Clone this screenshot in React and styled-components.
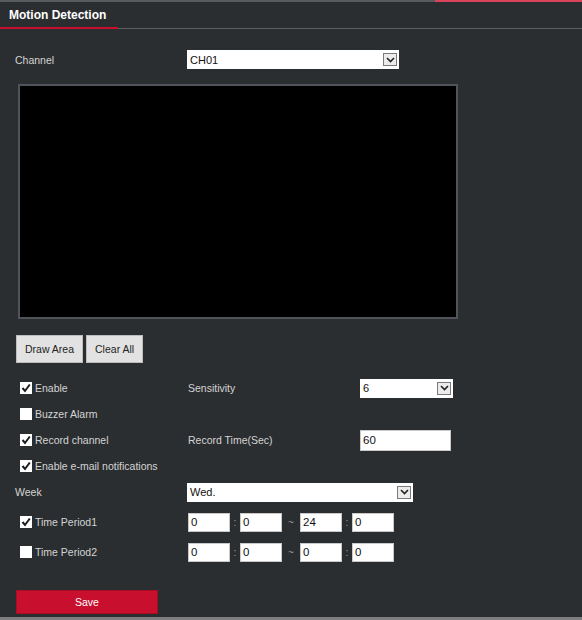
import styled, { createGlobalStyle } from "styled-components";

const GlobalStyle = createGlobalStyle`
  html, body { margin: 0; padding: 0; background: #2b2e31; }
  body { font-family: "Liberation Sans", Arial, sans-serif; }
`;

const Page = styled.div`
  width: 582px;
  height: 620px;
  background: #2b2e31;
  display: flex;
  flex-direction: column;
  overflow: hidden;
`;

const TopLine = styled.div`
  display: flex;
  height: 2px;
  .gray { flex: 1; background: #575a5d; }
  .red { width: 147px; background: #d9445a; }
`;

const TitleBar = styled.div`
  height: 25px;
  display: flex;
  align-items: center;
  padding-left: 9px;
  h2 {
    margin: 0;
    font-size: 12px;
    font-weight: bold;
    color: #ffffff;
  }
`;

const TitleLine = styled.div`
  display: flex;
  height: 2px;
  .red { width: 118px; background: #c8102e; }
  .gray { flex: 1; background: #5c5f62; height: 1px; margin-top: 1px; }
`;

const Content = styled.div`
  flex: 1;
  padding: 21px 0 0 15px;
  display: flex;
  flex-direction: column;
`;

const Row = styled.div`
  display: flex;
  align-items: center;
  height: ${(p) => p.$h || 26}px;
`;

const Label = styled.span`
  width: ${(p) => p.$w || 172}px;
  font-size: 10.5px;
  color: #d4d4d4;
  flex-shrink: 0;
`;

const SelectBox = styled.div`
  width: ${(p) => p.$w}px;
  height: 19px;
  background: #fff;
  display: flex;
  align-items: center;
  justify-content: space-between;
  box-sizing: border-box;
  padding: 0 2px 0 3px;
  font-size: 11px;
  color: #111;
`;

const Arrow = styled.span`
  width: 14px;
  height: 13px;
  box-sizing: border-box;
  border: 1px solid #7a7a7a;
  background: #ececec;
  display: flex;
  align-items: center;
  justify-content: center;
`;

const Video = styled.div`
  margin: 15px 0 0 3px;
  width: 440px;
  height: 235px;
  background: #000;
  border: 2px solid #50545a;
  box-sizing: border-box;
`;

const ButtonRow = styled.div`
  display: flex;
  gap: 3px;
  margin: 16px 0 12px 1px;
`;

const GrayButton = styled.button`
  height: 28px;
  padding: 0 8px;
  background: #e2e2e2;
  border: 1px solid #bdbdbd;
  font-family: inherit;
  font-size: 10.5px;
  color: #222;
`;

const OptionGrid = styled.div`
  display: grid;
  grid-template-columns: 173px 172px auto;
  grid-auto-rows: 26px;
  align-items: center;
`;

const Check = styled.label`
  display: flex;
  align-items: center;
  gap: 3px;
  padding-left: 5px;
  font-size: 10.5px;
  color: #d4d4d4;
`;

const Box = styled.span`
  width: 12px;
  height: 12px;
  background: #fff;
  display: flex;
  align-items: center;
  justify-content: center;
`;

const TextInput = styled.div`
  width: ${(p) => p.$w}px;
  height: ${(p) => p.$ht || 19}px;
  background: #fff;
  box-sizing: border-box;
  border: 1px solid #c9c9c9;
  padding-left: 2px;
  display: flex;
  align-items: center;
  font-size: 11.5px;
  color: #111;
`;

const TimeGroup = styled.div`
  display: flex;
  align-items: center;
  padding-left: 1px;
`;

const Sep = styled.span`
  width: 10px;
  text-align: center;
  font-size: 10px;
  color: #9a9a9a;
`;

const Tilde = styled(Sep)`
  width: 18px;
`;

const TimeSection = styled.div`
  margin-top: 2px;
`;

const SaveButton = styled.button`
  margin: 23px 0 0 1px;
  width: 142px;
  height: 24px;
  background: #c8102e;
  border: 1px solid #a80d25;
  color: #fff;
  font-family: inherit;
  font-size: 10.5px;
`;

const Footer = styled.div`
  height: 3px;
  background: #7c7e80;
`;

function Chevron() {
  return (
    <svg width="9" height="6" viewBox="0 0 9 6">
      <path d="M1 1 L4.5 4.5 L8 1" fill="none" stroke="#222" strokeWidth="1.6" />
    </svg>
  );
}

function CheckItem({ checked, children }) {
  return (
    <Check>
      <Box>
        {checked && (
          <svg width="10" height="10" viewBox="0 0 10 10">
            <path d="M1.5 5 L4 8 L8.8 1.5" fill="none" stroke="#1d1d1d" strokeWidth="2" />
          </svg>
        )}
      </Box>
      {children}
    </Check>
  );
}

function TimeRow({ values }) {
  return (
    <TimeGroup>
      <TextInput $w={42}>{values[0]}</TextInput>
      <Sep>:</Sep>
      <TextInput $w={42}>{values[1]}</TextInput>
      <Tilde>~</Tilde>
      <TextInput $w={42}>{values[2]}</TextInput>
      <Sep>:</Sep>
      <TextInput $w={42}>{values[3]}</TextInput>
    </TimeGroup>
  );
}

export default function App() {
  return (
    <Page>
      <GlobalStyle />
      <TopLine>
        <div className="gray" />
        <div className="red" />
      </TopLine>
      <TitleBar>
        <h2>Motion Detection</h2>
      </TitleBar>
      <TitleLine>
        <div className="red" />
        <div className="gray" />
      </TitleLine>

      <Content>
        <Row $h={19}>
          <Label>Channel</Label>
          <SelectBox $w={212}>
            CH01
            <Arrow><Chevron /></Arrow>
          </SelectBox>
        </Row>

        <Video />

        <ButtonRow>
          <GrayButton>Draw Area</GrayButton>
          <GrayButton>Clear All</GrayButton>
        </ButtonRow>

        <OptionGrid>
          <CheckItem checked>Enable</CheckItem>
          <Label>Sensitivity</Label>
          <SelectBox $w={93}>
            6
            <Arrow><Chevron /></Arrow>
          </SelectBox>

          <CheckItem>Buzzer Alarm</CheckItem>
          <span />
          <span />

          <CheckItem checked>Record channel</CheckItem>
          <Label>Record Time(Sec)</Label>
          <TextInput $w={91} $ht={21}>60</TextInput>

          <CheckItem checked>Enable e-mail notifications</CheckItem>
          <span />
          <span />
        </OptionGrid>

        <Row>
          <Label $w={172}>Week</Label>
          <SelectBox $w={226}>
            Wed.
            <Arrow><Chevron /></Arrow>
          </SelectBox>
        </Row>

        <TimeSection>
          <Row $h={30}>
            <Label $w={172}>
              <CheckItem checked>Time Period1</CheckItem>
            </Label>
            <TimeRow values={["0", "0", "24", "0"]} />
          </Row>

          <Row $h={30}>
            <Label $w={172}>
              <CheckItem>Time Period2</CheckItem>
            </Label>
            <TimeRow values={["0", "0", "0", "0"]} />
          </Row>
        </TimeSection>

        <div>
          <SaveButton>Save</SaveButton>
        </div>
      </Content>
      <Footer />
    </Page>
  );
}
